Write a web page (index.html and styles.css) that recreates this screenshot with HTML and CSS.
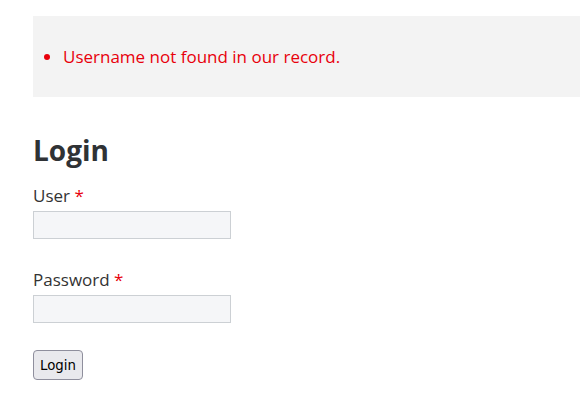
FILE: index.html
```html
<!DOCTYPE html>
<html>
<head>
<meta charset="utf-8">
<link rel="stylesheet" href="styles.css">
</head>
<body>
<div class="messages">
  <ul class="msg-list">
    <li>Username not found in our record.</li>
  </ul>
</div>
<h1 class="title">Login</h1>
<form class="login-form">
  <div class="field">
    <label class="label">User <span class="req">*</span></label>
    <input class="input" type="text">
  </div>
  <div class="field">
    <label class="label">Password <span class="req">*</span></label>
    <input class="input" type="password">
  </div>
  <button class="btn" type="button">Login</button>
</form>
</body>
</html>
```
FILE: styles.css
```css
html, body { margin: 0; padding: 0; background: #fff; }
body {
  padding: 16px 0 0 33px;
  font-family: "Open Sans", "Noto Sans", sans-serif;
  font-size: 17px;
  color: #333;
}
.messages {
  background: #f3f3f3;
  height: 81px;
  box-sizing: border-box;
  padding-top: 29px;
}
.msg-list {
  margin: 0;
  padding-left: 30px;
  color: #e8000b;
  line-height: 24px;
}
.title {
  margin: 35px 0 0;
  font-size: 28px;
  font-weight: 700;
  line-height: 36px;
  color: #2f3235;
}
.login-form { margin-top: 16px; }
.field { display: flex; flex-direction: column; align-items: flex-start; margin-bottom: 29px; }
.field:last-of-type { margin-bottom: 27px; }
.label { line-height: 24px; margin-bottom: 3px; color: #333; }
.req { color: #e8000b; }
.input {
  width: 198px;
  height: 28px;
  box-sizing: border-box;
  border: 1px solid #ccd0d4;
  background: #f5f6f8;
  margin: 0;
}
.btn {
  font-family: "DejaVu Sans", sans-serif;
  font-size: 13.33px;
  height: 30px;
  padding: 0 6px;
  margin: 0;
  border: 1px solid #8f8f9d;
  border-radius: 4px;
  background: #e9e9ed;
  color: #000;
}
```
